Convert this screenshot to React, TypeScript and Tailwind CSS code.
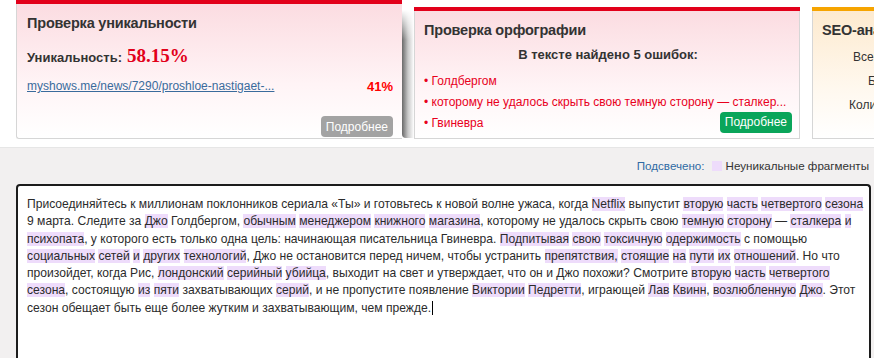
import React from "react";

const HL = "bg-[#eedcfb]";

type Seg = string | { h: string };

const lines: Seg[][] = [
  [
    "Присоединяйтесь к миллионам поклонников сериала «Ты» и готовьтесь к новой волне ужаса, когда ",
    { h: "Netflix" },
    " выпустит ",
    { h: "вторую" },
    " ",
    { h: "часть" },
    " ",
    { h: "четвертого" },
    " ",
    { h: "сезона" },
  ],
  [
    "9 марта. Следите за ",
    { h: "Джо" },
    " Голдбергом, ",
    { h: "обычным" },
    " ",
    { h: "менеджером" },
    " ",
    { h: "книжного" },
    " ",
    { h: "магазина" },
    ", которому не удалось скрыть свою ",
    { h: "темную" },
    " ",
    { h: "сторону" },
    " — ",
    { h: "сталкера" },
    " ",
    { h: "и" },
  ],
  [
    { h: "психопата" },
    ", у которого есть только одна цель: начинающая писательница Гвиневра. ",
    { h: "Подпитывая" },
    " ",
    { h: "свою" },
    " ",
    { h: "токсичную" },
    " ",
    { h: "одержимость" },
    " с помощью",
  ],
  [
    { h: "социальных" },
    " ",
    { h: "сетей" },
    " ",
    { h: "и" },
    " ",
    { h: "других" },
    " ",
    { h: "технологий" },
    ", Джо не остановится перед ничем, чтобы устранить ",
    { h: "препятствия," },
    " ",
    { h: "стоящие" },
    " ",
    { h: "на" },
    " ",
    { h: "пути" },
    " ",
    { h: "их" },
    " ",
    { h: "отношений" },
    ". Но что",
  ],
  [
    "произойдет, когда Рис, ",
    { h: "лондонский" },
    " ",
    { h: "серийный" },
    " ",
    { h: "убийца" },
    ", выходит на свет и утверждает, что он и Джо похожи? Смотрите ",
    { h: "вторую" },
    " ",
    { h: "часть" },
    " ",
    { h: "четвертого" },
  ],
  [
    { h: "сезона" },
    ", состоящую ",
    { h: "из" },
    " ",
    { h: "пяти" },
    " захватывающих ",
    { h: "серий" },
    ", и не пропустите появление ",
    { h: "Виктории" },
    " ",
    { h: "Педретти" },
    ", играющей ",
    { h: "Лав" },
    " ",
    { h: "Квинн" },
    ", ",
    { h: "возлюбленную" },
    " ",
    { h: "Джо" },
    ". Этот",
  ],
  ["сезон обещает быть еще более жутким и захватывающим, чем прежде."],
];

function Button({ green, children }: { green?: boolean; children: React.ReactNode }) {
  return (
    <span
      className={
        "inline-flex h-[21px] items-center rounded-[4px] px-[5px] text-[12px] text-white " +
        (green ? "bg-[#0aa55a]" : "bg-[#a3a3a3]")
      }
    >
      {children}
    </span>
  );
}

export default function App() {
  return (
    <div className="w-[874px] h-[358px] overflow-hidden bg-white font-['Liberation_Sans',Arial,sans-serif] text-[#333]">
      {/* cards */}
      <div className="flex h-[147px] items-start pl-4">
        <div className="flex h-[139px] w-[386px] shrink-0 flex-col">
          <div className="h-[4px] bg-[#e2001a]" />
          <div className="flex flex-1 flex-col rounded-bl-[3px] border-b border-l border-[#d6d6d6] bg-gradient-to-b from-[#fbdce1] via-[#fff4f6] via-60% to-white pl-[10px] pr-[9px]">
            <div className="mt-[10px] text-[14.5px] font-bold leading-[18px] tracking-[-0.2px]">Проверка уникальности</div>
            <div className="mt-[10px] flex items-baseline gap-[5px]">
              <span className="text-[13px] font-bold">Уникальность:</span>
              <span className="font-['Liberation_Serif',serif] text-[19px] font-bold text-[#e2001a]">58.15%</span>
            </div>
            <div className="mt-[6px] flex items-center justify-between text-[12px]">
              <span className="text-[#3a6b9c] underline">myshows.me/news/7290/proshloe-nastigaet-...</span>
              <span className="text-[13px] font-bold text-[#ff0000]">41%</span>
            </div>
            <div className="mt-auto mb-[1px] flex justify-end">
              <Button>Подробнее</Button>
            </div>
          </div>
        </div>

        <div className="relative mt-[10px] h-[128px] w-[12px] shrink-0 rounded-bl-[4px] bg-gradient-to-r from-[#6a6a6a] via-[#c8c8c8] to-white">
          <div className="absolute inset-x-0 top-0 h-[30px] bg-gradient-to-b from-white to-transparent" />
        </div>

        <div className="mt-[7px] flex h-[132px] w-[386px] shrink-0 flex-col">
          <div className="h-[4px] bg-[#e2001a]" />
          <div className="flex flex-1 flex-col border-x border-b border-[#d6d6d6] bg-gradient-to-b from-[#fbdce1] via-[#fff4f6] via-60% to-white pl-[9px] pr-[7px]">
            <div className="mt-[10px] text-[14.5px] font-bold leading-[18px] tracking-[-0.2px]">Проверка орфографии</div>
            <div className="mt-[6px] text-center text-[13px] font-bold">В тексте найдено 5 ошибок:</div>
            <ul className="mt-[9px] flex flex-col gap-[6px] text-[12px] leading-[15px] text-[#e8001c]">
              <li>• Голдбергом</li>
              <li>• которому не удалось скрыть свою темную сторону — сталкер...</li>
              <li className="flex items-start justify-between">
                <span>• Гвиневра</span>
                <span className="-mt-[4px]">
                  <Button green>Подробнее</Button>
                </span>
              </li>
            </ul>
          </div>
        </div>

        <div className="ml-[12px] mt-[7px] flex h-[132px] w-[300px] shrink-0 flex-col">
          <div className="h-[4px] bg-[#f6a400]" />
          <div className="flex flex-1 flex-col whitespace-nowrap border-l border-b border-[#d6d6d6] bg-gradient-to-b from-[#fdeacf] via-[#fff8ee] via-60% to-white pl-[9px] text-[12px]">
            <div className="mt-[10px] text-[14.5px] font-bold leading-[18px] tracking-[-0.2px]">SEO-анализ текста</div>
            <div className="mt-[9px] pl-[31px]">Всего символов: 1016</div>
            <div className="mt-[6px] pl-[46px]">Без пробелов: 862</div>
            <div className="mt-[6px] pl-[27px]">Количество слов: 154</div>
          </div>
        </div>
      </div>

      {/* editor area */}
      <div className="h-[211px] border-t border-[#e6e6e6] bg-[#f2f0f0] pl-4 pr-[3px]">
        <div className="flex h-[36px] items-center justify-end gap-[4px] pr-[2px] text-[11.6px]">
          <span className="text-[#2f6aa3]">Подсвечено:</span>
          <span className="ml-[3px] h-[10px] w-[10px] bg-[#eedcfb]" />
          <span className="text-[#333]">Неуникальные фрагменты</span>
        </div>
        <div className="h-[200px] rounded-t-[4px] border-2 border-b-0 border-[#1c1c1c] bg-white pl-[9px] pt-[10px] text-[12.1px] leading-[17.3px] text-[#2b2b2b]">
          {lines.map((line, i) => (
            <div key={i} className="h-[17.3px] whitespace-nowrap">
              {line.map((s, j) =>
                typeof s === "string" ? (
                  <span key={j}>{s}</span>
                ) : (
                  <span key={j} className={HL}>
                    {s.h}
                  </span>
                )
              )}
              {i === lines.length - 1 && (
                <span className="ml-[1px] inline-block h-[14px] w-px align-[-3px] bg-black" />
              )}
            </div>
          ))}
        </div>
      </div>
    </div>
  );
}
